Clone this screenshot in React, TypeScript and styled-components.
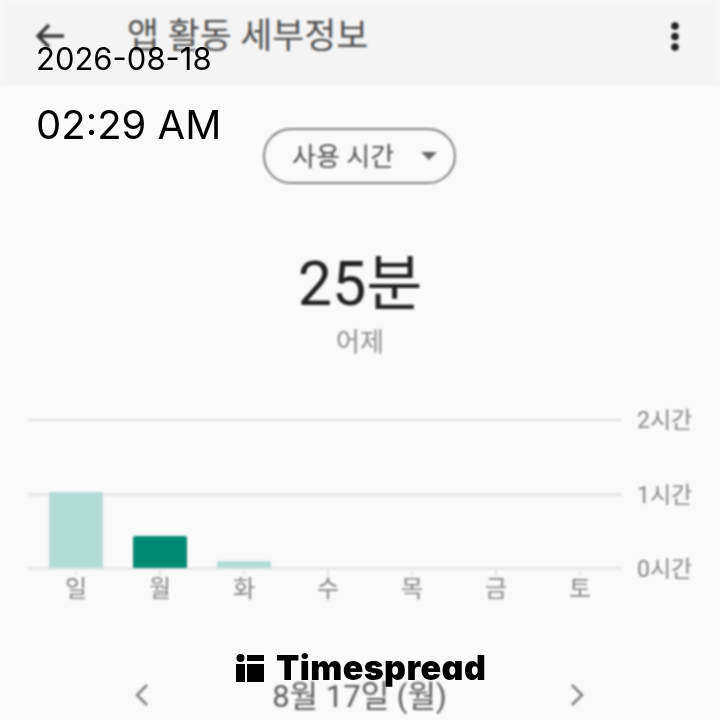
import React from 'react';
import styled, { createGlobalStyle } from 'styled-components';

const GlobalStyle = createGlobalStyle`
  html, body {
    margin: 0;
    padding: 0;
    background: #fafafa;
  }
  body {
    font-family: Roboto, 'Noto Sans CJK KR', sans-serif;
  }
`;

const Screen = styled.div`
  position: relative;
  width: 720px;
  height: 720px;
  overflow: hidden;
  background: #fafafa;
`;

const Content = styled.div`
  display: flex;
  flex-direction: column;
  align-items: center;
  height: 720px;
  filter: blur(0.8px);
`;

const Header = styled.header`
  display: flex;
  align-items: center;
  align-self: stretch;
  box-sizing: border-box;
  flex: 0 0 86px;
  padding: 0 41px 14px 35px;
  background: #f4f4f4;
`;

const Title = styled.h1`
  flex: 1;
  margin: 0 0 0 62px;
  font-size: 34.8px;
  font-weight: 400;
  line-height: 1;
  color: #505050;
`;

const Pill = styled.div`
  display: flex;
  align-items: center;
  justify-content: space-between;
  box-sizing: border-box;
  width: 193px;
  height: 56px;
  margin: 42px 1px 0 0;
  padding: 0 17px 3px 27px;
  border: 2px solid #808080;
  border-radius: 28px;
  font-size: 26px;
  color: #505050;
`;

const Caret = styled.span`
  width: 0;
  height: 0;
  margin-top: 3px;
  border-left: 8px solid transparent;
  border-right: 8px solid transparent;
  border-top: 8px solid #666;
`;

const Total = styled.div`
  margin-top: 62px;
  font-size: 61px;
  line-height: 76px;
  color: #222;
`;

const Caption = styled.div`
  margin-top: 2px;
  font-size: 26px;
  line-height: 36px;
  color: #8e8e8e;
`;

const Chart = styled.div`
  position: relative;
  align-self: stretch;
  margin-top: 46px;
  padding-left: 28px;
`;

const GridRow = styled.div<{ $first?: boolean }>`
  display: flex;
  align-items: flex-end;
  height: ${p => (p.$first ? 15 : 74.5)}px;
  line-height: 0;
`;

const GridLine = styled.div<{ $thin?: boolean }>`
  width: 594px;
  height: ${p => (p.$thin ? 2 : 3)}px;
  background: ${p => (p.$thin ? '#e0e0e0' : '#e8e8e8')};
`;

const GridLabel = styled.span`
  margin-left: 15px;
  font-size: 23px;
  color: #858585;
`;

const Bars = styled.div`
  position: absolute;
  left: 34px;
  bottom: 2px;
  display: grid;
  grid-template-columns: repeat(7, 84px);
  align-items: end;
`;

const Bar = styled.div<{ $active?: boolean }>`
  justify-self: center;
  width: 54px;
  border-radius: 2px 2px 0 0;
  background: ${p => (p.$active ? '#008a74' : '#b2dbd6')};
`;

const Days = styled.div`
  display: grid;
  grid-template-columns: repeat(7, 84px);
  align-self: flex-start;
  margin-left: 34px;
`;

const Day = styled.div`
  position: relative;
  padding-top: 2px;
  font-size: 24px;
  line-height: 34px;
  text-align: center;
  color: #858585;

  &::before {
    content: '';
    position: absolute;
    left: 41px;
    top: 0;
    width: 2px;
    height: 5px;
    background: #e4e4e4;
  }
`;

const DateNav = styled.div`
  display: flex;
  align-items: center;
  justify-content: space-between;
  box-sizing: border-box;
  width: 100%;
  margin-top: 71px;
  padding: 0 133px 0 132px;
  font-size: 31px;
  line-height: 40px;
  color: #5a5a5a;
`;

const NavIcon = styled.svg`
  margin-top: -4px;
`;

const DateStamp = styled.div`
  position: absolute;
  left: 36px;
  top: 41px;
  font-family: Inter, sans-serif;
  font-size: 31px;
  line-height: 36px;
  color: #000;
`;

const TimeStamp = styled.div`
  position: absolute;
  left: 36px;
  top: 100px;
  font-family: Inter, sans-serif;
  font-size: 40px;
  line-height: 50px;
  color: #000;
`;

const Logo = styled.div`
  position: absolute;
  left: 236px;
  top: 650px;
  display: flex;
  align-items: center;
  gap: 12px;
  font-family: Inter, sans-serif;
  font-size: 34px;
  font-weight: 900;
  font-feature-settings: 'cv11';
  letter-spacing: 0.4px;
  line-height: 36px;
  color: #000;
`;

const days = ['일', '월', '화', '수', '목', '금', '토'];
const bars = [76, 32, 7, 0, 0, 0, 0];

export default function App() {
  return (
    <Screen>
      <GlobalStyle />
      <Content>
        <Header>
          <svg width="30" height="28" viewBox="0 0 30 28" fill="none" stroke="#3a3a3a" strokeWidth="3.4">
            <path d="M29 14H3M14 3L3 14l11 11" />
          </svg>
          <Title>앱 활동 세부정보</Title>
          <svg width="8" height="30" viewBox="0 0 8 30" fill="#222">
            <circle cx="4" cy="5" r="3.8" />
            <circle cx="4" cy="15.5" r="3.8" />
            <circle cx="4" cy="26" r="3.8" />
          </svg>
        </Header>
        <Pill>
          사용 시간
          <Caret />
        </Pill>
        <Total>25분</Total>
        <Caption>어제</Caption>
        <Chart>
          <GridRow $first>
            <GridLine $thin />
            <GridLabel>2시간</GridLabel>
          </GridRow>
          <GridRow>
            <GridLine />
            <GridLabel>1시간</GridLabel>
          </GridRow>
          <GridRow>
            <GridLine />
            <GridLabel>0시간</GridLabel>
          </GridRow>
          <Bars>
            {bars.map((h, i) => (
              <Bar key={i} $active={i === 1} style={{ height: h }} />
            ))}
          </Bars>
        </Chart>
        <Days>
          {days.map(d => (
            <Day key={d}>{d}</Day>
          ))}
        </Days>
        <DateNav>
          <NavIcon width="20" height="24" viewBox="0 0 20 24" fill="none" stroke="#808080" strokeWidth="2.6">
            <path d="M15 2L5 12l10 10" />
          </NavIcon>
          <span>8월 17일 (월)</span>
          <NavIcon width="20" height="24" viewBox="0 0 20 24" fill="none" stroke="#808080" strokeWidth="2.6">
            <path d="M5 2l10 10L5 22" />
          </NavIcon>
        </DateNav>
      </Content>
      <DateStamp>2026-08-18</DateStamp>
      <TimeStamp>02:29 AM</TimeStamp>
      <Logo>
        <svg width="28" height="28" viewBox="0 0 28 28" fill="#000">
          <circle cx="4.5" cy="4" r="4" />
          <rect x="0" y="10" width="9" height="18" />
          <rect x="11" y="1" width="17" height="6" />
          <rect x="11" y="10" width="17" height="18" />
        </svg>
        Timespread
      </Logo>
    </Screen>
  );
}
